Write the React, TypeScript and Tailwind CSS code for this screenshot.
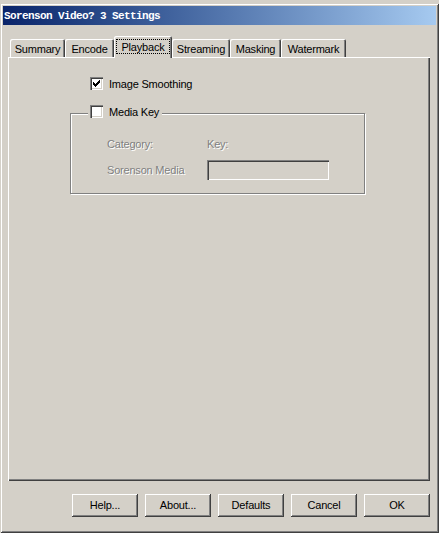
const tabs = [
  { label: "Summary", w: "w-[55px]" },
  { label: "Encode", w: "w-[49px]" },
  { label: "Playback", w: "w-[58px]", active: true },
  { label: "Streaming", w: "w-[58px]" },
  { label: "Masking", w: "w-[51px]" },
  { label: "Watermark", w: "w-[65px]" },
];

const buttons = ["Help...", "About...", "Defaults", "Cancel", "OK"];

const sunken =
  "shadow-[inset_1px_1px_#808080,inset_2px_2px_#404040,inset_-1px_-1px_#ffffff,inset_-2px_-2px_#d4d0c8]";

function CheckBox({ checked }: { checked?: boolean }) {
  return (
    <span className={`block h-[13px] w-[13px] shrink-0 bg-white ${sunken}`}>
      {checked && (
        <svg width="13" height="13" viewBox="0 0 13 13" shapeRendering="crispEdges">
          <g fill="#000" transform="translate(3 3)">
            <rect x="6" y="0" width="1" height="1" />
            <rect x="5" y="1" width="2" height="1" />
            <rect x="0" y="2" width="1" height="1" />
            <rect x="4" y="2" width="3" height="1" />
            <rect x="0" y="3" width="2" height="1" />
            <rect x="3" y="3" width="3" height="1" />
            <rect x="0" y="4" width="5" height="1" />
            <rect x="1" y="5" width="3" height="1" />
            <rect x="2" y="6" width="1" height="1" />
          </g>
        </svg>
      )}
    </span>
  );
}

export default function App() {
  return (
    <div className="h-[533px] w-[439px] overflow-hidden bg-[#d4d0c8] pt-[3px] font-['Liberation_Sans',Arial,sans-serif] text-[11px] tracking-[-0.2px] text-black">
      <div className="h-[530px] w-[439px] p-[3px] shadow-[inset_1px_1px_#d4d0c8,inset_-1px_-1px_#404040,inset_2px_2px_#ffffff,inset_-2px_-2px_#808080]">
        {/* title bar */}
        <div className="flex h-[19px] items-center bg-linear-to-r from-[#0a246a] to-[#a6caf0] pl-[1px] pt-[1px]">
          <span className="font-['Liberation_Mono',monospace] text-[11px] font-bold tracking-[-0.6px] text-white">
            Sorenson Video? 3 Settings
          </span>
        </div>

        <div className="ml-[5px] mt-[11px]">
          {/* tabs */}
          <div className="flex h-[21px] items-end pl-[2px]">
            {tabs.map((t) =>
              t.active ? (
                <div
                  key={t.label}
                  className={`relative z-10 -mb-[1px] h-[22px] ${t.w} rounded-t-[2px] bg-[#d4d0c8] px-[2px] pt-[3px] shadow-[inset_1px_1px_#ffffff,inset_-1px_0_#404040,inset_-2px_0_#808080]`}
                >
                  <div className="flex h-[15px] items-center justify-center border border-dotted border-black pt-[1px]">
                    {t.label}
                  </div>
                </div>
              ) : (
                <div
                  key={t.label}
                  className={`flex h-[18px] ${t.w} items-center justify-center rounded-t-[2px] pt-[2px] shadow-[inset_1px_1px_#ffffff,inset_-1px_0_#404040,inset_-2px_0_#808080]`}
                >
                  {t.label}
                </div>
              )
            )}
          </div>

          {/* panel */}
          <div className="h-[424px] w-[422px] pt-[20px] shadow-[inset_1px_1px_#ffffff,inset_-1px_-1px_#404040,inset_-2px_-2px_#808080]">
            <div className="ml-[82px] flex h-[13px] items-center gap-[6px]">
              <CheckBox checked />
              <span className="mt-[2px]">Image Smoothing</span>
            </div>

            <div className="relative ml-[62px] mt-[23px] h-[81px] w-[295px] border border-[#808080] shadow-[inset_1px_1px_#ffffff,1px_1px_#ffffff]">
              <div className="absolute -top-[9px] left-[17px] flex h-[13px] items-center gap-[6px] bg-[#d4d0c8] px-[2px]">
                <CheckBox />
                <span className="mt-[2px] pr-[1px]">Media Key</span>
              </div>

              <div className="pl-[36px] pt-[24px] text-[#808080] [text-shadow:1px_1px_0_#ffffff]">
                <div className="flex h-[13px] items-center leading-[13px]">
                  <span className="w-[100px]">Category:</span>
                  <span>Key:</span>
                </div>
                <div className="mt-[9px] flex h-[20px] items-center">
                  <span className="w-[100px]">Sorenson Media</span>
                  <div className={`h-[20px] w-[122px] bg-[#d4d0c8] ${sunken}`} />
                </div>
              </div>
            </div>
          </div>
        </div>

        {/* buttons */}
        <div className="mt-[13px] flex justify-end gap-[7px] pr-[6px]">
          {buttons.map((b) => (
            <button
              key={b}
              className="flex h-[23px] w-[66px] items-center justify-center shadow-[inset_-1px_-1px_#404040,inset_1px_1px_#ffffff,inset_-2px_-2px_#808080]"
            >
              {b}
            </button>
          ))}
        </div>
      </div>
    </div>
  );
}
